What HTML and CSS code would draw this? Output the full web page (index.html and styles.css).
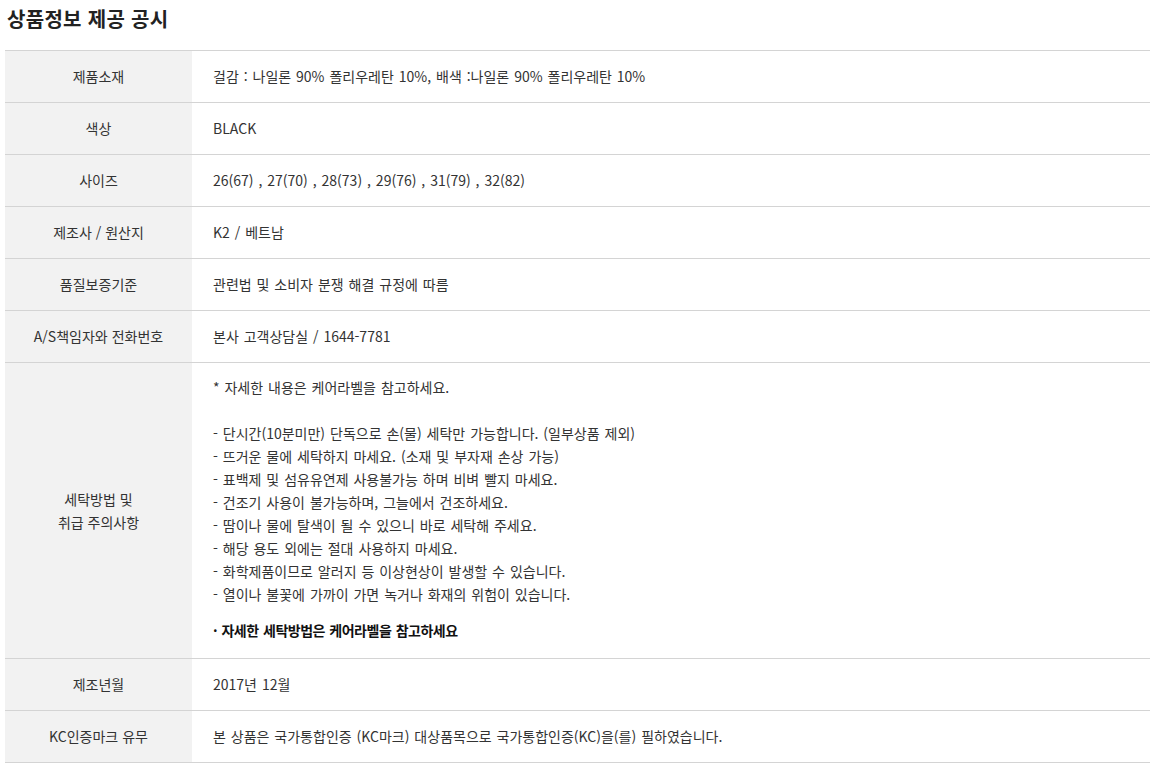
FILE: index.html
```html
<!DOCTYPE html>
<html lang="ko">
<head>
<meta charset="utf-8">
<title>상품정보 제공 공시</title>
<link rel="stylesheet" href="styles.css">
</head>
<body>
<div class="page">
  <h2 class="title">상품정보 제공 공시</h2>
  <table class="info">
    <tbody>
      <tr><th>제품소재</th><td>걸감 : 나일론 90% 폴리우레탄 10%, 배색 :나일론 90% 폴리우레탄 10%</td></tr>
      <tr><th>색상</th><td>BLACK</td></tr>
      <tr><th>사이즈</th><td>26(67) , 27(70) , 28(73) , 29(76) , 31(79) , 32(82)</td></tr>
      <tr><th>제조사 / 원산지</th><td>K2 / 베트남</td></tr>
      <tr><th>품질보증기준</th><td>관련법 및 소비자 분쟁 해결 규정에 따름</td></tr>
      <tr><th>A/S책임자와 전화번호</th><td>본사 고객상담실 / 1644-7781</td></tr>
      <tr class="tall">
        <th>세탁방법 및<br>취급 주의사항</th>
        <td>
          <p class="lines">* 자세한 내용은 케어라벨을 참고하세요.<br><br>- 단시간(10분미만) 단독으로 손(물) 세탁만 가능합니다. (일부상품 제외)<br>- 뜨거운 물에 세탁하지 마세요. (소재 및 부자재 손상 가능)<br>- 표백제 및 섬유유연제 사용불가능 하며 비벼 빨지 마세요.<br>- 건조기 사용이 불가능하며, 그늘에서 건조하세요.<br>- 땀이나 물에 탈색이 될 수 있으니 바로 세탁해 주세요.<br>- 해당 용도 외에는 절대 사용하지 마세요.<br>- 화학제품이므로 알러지 등 이상현상이 발생할 수 있습니다.<br>- 열이나 불꽃에 가까이 가면 녹거나 화재의 위험이 있습니다.</p>
          <p class="note">· 자세한 세탁방법은 케어라벨을 참고하세요</p>
        </td>
      </tr>
      <tr><th>제조년월</th><td>2017년 12월</td></tr>
      <tr><th>KC인증마크 유무</th><td>본 상품은 국가통합인증 (KC마크) 대상품목으로 국가통합인증(KC)을(를) 필하였습니다.</td></tr>
    </tbody>
  </table>
</div>
</body>
</html>
```
FILE: styles.css
```css
html, body {
  margin: 0;
  padding: 0;
  background: #fff;
}
body {
  font-family: "Noto Sans CJK KR", "Noto Sans", sans-serif;
  color: #333;
  font-size: 14px;
}
.page {
  padding: 0 5px;
}
.title {
  margin: 0;
  padding: 6px 0 0 2px;
  height: 50px;
  box-sizing: border-box;
  font-size: 20px;
  line-height: 26px;
  font-weight: bold;
  color: #222;
  letter-spacing: 0.3px;
}
.info {
  width: 1145px;
  border-collapse: collapse;
  border-bottom: 1px solid #d4d4d4;
}
.info tr {
  border-top: 1px solid #d4d4d4;
}
.info th {
  width: 187px;
  background: #f2f2f2;
  font-weight: normal;
  text-align: center;
  vertical-align: middle;
  padding: 0;
  height: 51px;
  line-height: 23px;
  color: #333;
}
.info td {
  padding: 0 0 0 21px;
  height: 51px;
  line-height: 23px;
  vertical-align: middle;
  word-spacing: 1px;
}
.info .tall td {
  padding: 13px 0 16px 21px;
}
.lines {
  margin: 0;
}
.note {
  margin: 13px 0 0;
  font-weight: bold;
  color: #111;
  letter-spacing: -0.5px;
}
```
